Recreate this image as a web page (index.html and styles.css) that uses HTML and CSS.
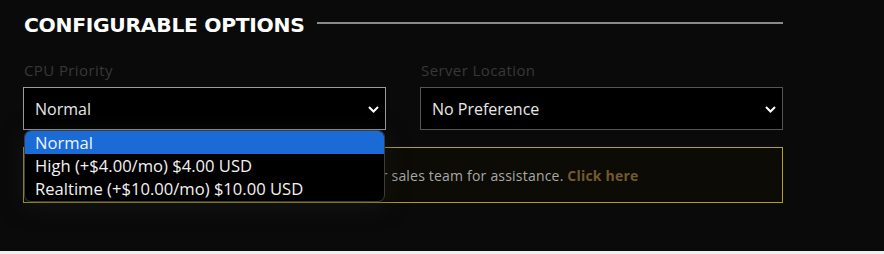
FILE: index.html
```html
<!DOCTYPE html>
<html>
<head>
<meta charset="utf-8">
<link rel="stylesheet" href="styles.css">
</head>
<body>
<div class="page">
  <div class="section">
    <div class="heading-row">
      <h2 class="heading">CONFIGURABLE OPTIONS</h2>
      <span class="rule"></span>
    </div>
    <div class="fields">
      <div class="field">
        <label class="label">CPU Priority</label>
        <div class="select focused">
          <span class="value">Normal</span>
          <svg class="chev" width="11" height="7" viewBox="0 0 11 7"><path d="M1 1 L5.5 5.5 L10 1" fill="none" stroke="#fff" stroke-width="2"/></svg>
        </div>
        <div class="menu">
          <div class="opt active">Normal</div>
          <div class="opt">High (+$4.00/mo) $4.00 USD</div>
          <div class="opt">Realtime (+$10.00/mo) $10.00 USD</div>
        </div>
      </div>
      <div class="field">
        <label class="label">Server Location</label>
        <div class="select">
          <span class="value">No Preference</span>
          <svg class="chev" width="11" height="7" viewBox="0 0 11 7"><path d="M1 1 L5.5 5.5 L10 1" fill="none" stroke="#fff" stroke-width="2"/></svg>
        </div>
      </div>
    </div>
    <div class="alert">Need a custom hardware configuration? Contact our sales team for assistance. <a class="link" href="#">Click here</a></div>
  </div>
</div>
</body>
</html>
```
FILE: styles.css
```css
html, body {
  margin: 0;
  padding: 0;
  background: #f0f0f0;
}
.page {
  height: 251px;
  background: #0a0a0a;
  overflow: hidden;
}
.section {
  width: 760px;
  padding: 10px 0 0 23px;
  font-family: "DejaVu Sans", sans-serif;
}
.heading-row {
  display: flex;
  align-items: center;
  height: 30px;
}
.heading {
  margin: 0;
  font-family: "DejaVu Sans", sans-serif;
  font-weight: bold;
  font-size: 20.3px;
  color: #fff;
  padding-left: 1px;
  letter-spacing: -0.3px;
}
.rule {
  flex: 1;
  height: 2px;
  background: #8a8a8a;
  margin-left: 12px;
  margin-top: -4px;
}
.fields {
  display: grid;
  grid-template-columns: 1fr 1fr;
  column-gap: 34px;
  margin-top: 20px;
}
.field {
  position: relative;
  display: flex;
  flex-direction: column;
}
.label {
  font-family: "Open Sans", sans-serif;
  font-size: 15px;
  letter-spacing: 0.4px;
  color: #383838;
  line-height: 20px;
  padding-left: 1px;
  margin-bottom: 7px;
}
.select {
  height: 41px;
  border: 1px solid #555;
  background: #000;
  display: flex;
  align-items: center;
  justify-content: space-between;
  padding: 0 6px 0 11px;
}
.select.focused {
  border-color: #9c9c9c;
}
.value {
  font-family: "Open Sans", sans-serif;
  font-size: 16px;
  color: #e8e8e8;
}
.chev {
  margin-top: 1px;
}
.menu {
  position: absolute;
  left: 1px;
  top: 70px;
  width: 359px;
  background: #000;
  border: 1px solid #3c3c3c;
  border-radius: 7px;
  overflow: hidden;
  padding-bottom: 1px;
  box-shadow: 0 4px 22px rgba(30,30,30,0.55);
  z-index: 2;
}
.opt {
  height: 23px;
  line-height: 23px;
  padding-left: 10px;
  font-family: "Open Sans", sans-serif;
  font-size: 16.6px;
  color: #f2f2f2;
}
.opt.active {
  background: #1a6bd6;
  color: #eef4ff;
}
.alert {
  margin-top: 17px;
  height: 54px;
  border: 1px solid #b3a020;
  background: #0c0b05;
  display: flex;
  align-items: center;
  padding-left: 12px;
  font-family: "Open Sans", sans-serif;
  font-size: 14px;
  letter-spacing: 0.2px;
  color: #a8a8a8;
  white-space: pre;
}
.link {
  color: #735a2c;
  font-weight: bold;
  text-decoration: none;
}
```
